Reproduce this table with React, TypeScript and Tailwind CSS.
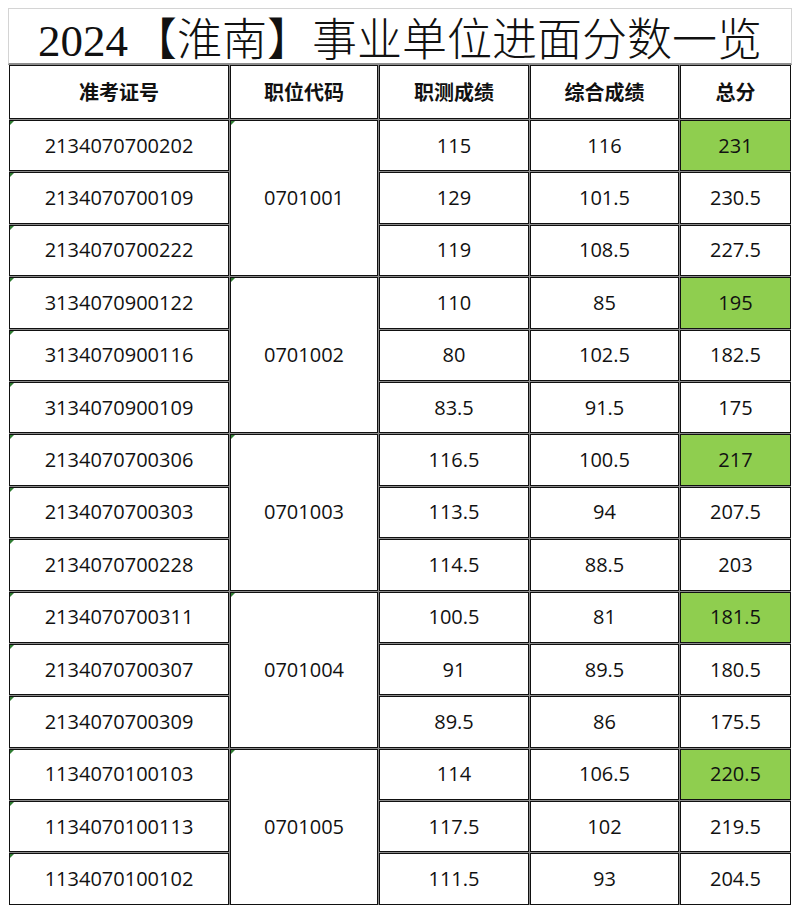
import React from "react";

type Row = { id: string; a: string; b: string; t: string; hi?: boolean };
type Group = { code: string; rows: Row[] };

const groups: Group[] = [
  {
    code: "0701001",
    rows: [
      { id: "2134070700202", a: "115", b: "116", t: "231", hi: true },
      { id: "2134070700109", a: "129", b: "101.5", t: "230.5" },
      { id: "2134070700222", a: "119", b: "108.5", t: "227.5" },
    ],
  },
  {
    code: "0701002",
    rows: [
      { id: "3134070900122", a: "110", b: "85", t: "195", hi: true },
      { id: "3134070900116", a: "80", b: "102.5", t: "182.5" },
      { id: "3134070900109", a: "83.5", b: "91.5", t: "175" },
    ],
  },
  {
    code: "0701003",
    rows: [
      { id: "2134070700306", a: "116.5", b: "100.5", t: "217", hi: true },
      { id: "2134070700303", a: "113.5", b: "94", t: "207.5" },
      { id: "2134070700228", a: "114.5", b: "88.5", t: "203" },
    ],
  },
  {
    code: "0701004",
    rows: [
      { id: "2134070700311", a: "100.5", b: "81", t: "181.5", hi: true },
      { id: "2134070700307", a: "91", b: "89.5", t: "180.5" },
      { id: "2134070700309", a: "89.5", b: "86", t: "175.5" },
    ],
  },
  {
    code: "0701005",
    rows: [
      { id: "1134070100103", a: "114", b: "106.5", t: "220.5", hi: true },
      { id: "1134070100113", a: "117.5", b: "102", t: "219.5" },
      { id: "1134070100102", a: "111.5", b: "93", t: "204.5" },
    ],
  },
];

const numFont = { fontFamily: '"Open Sans", "Noto Sans", "Noto Sans CJK SC", sans-serif' };

function Tri() {
  return (
    <span className="absolute left-0 top-0 w-0 h-0 border-t-[4px] border-r-[4px] border-t-[#2f7d32] border-r-transparent" />
  );
}

function Cell({
  children,
  className = "",
  tri = false,
}: {
  children: React.ReactNode;
  className?: string;
  tri?: boolean;
}) {
  return (
    <div
      className={
        "relative flex items-center justify-center border border-[#111] text-[20px] text-[#111] " +
        className
      }
      style={numFont}
    >
      {tri && <Tri />}
      {children}
    </div>
  );
}

export default function App() {
  const headers = ["准考证号", "职位代码", "职测成绩", "综合成绩", "总分"];
  const cells: React.ReactNode[] = [];
  groups.forEach((g, gi) => {
    g.rows.forEach((r, ri) => {
      cells.push(
        <Cell key={`id-${gi}-${ri}`} tri className="bg-white">
          <span>{r.id}</span>
        </Cell>
      );
      if (ri === 0) {
        cells.push(
          <Cell key={`code-${gi}`} tri className="bg-white row-span-3">
            <span>{g.code}</span>
          </Cell>
        );
      }
      cells.push(
        <Cell key={`a-${gi}-${ri}`} className="bg-white">
          <span>{r.a}</span>
        </Cell>
      );
      cells.push(
        <Cell key={`b-${gi}-${ri}`} className="bg-white">
          <span>{r.b}</span>
        </Cell>
      );
      cells.push(
        <Cell
          key={`t-${gi}-${ri}`}
          className={r.hi ? "bg-[#8fce4f] border-[#2a3a22]" : "bg-white"}
        >
          <span>{r.t}</span>
        </Cell>
      );
    });
  });

  return (
    <div className="w-[800px] h-[914px] bg-white px-[8px] pt-[8px]">
      <div className="h-[57px] border border-[#d4d4d4] border-b-[2px] border-b-[#8c8c8c] flex items-center justify-center">
        <div className="flex items-baseline pt-[6px] text-[45px] leading-none text-[#111]">
          <span style={{ fontFamily: '"Liberation Serif", "DejaVu Serif", serif' }}>2024</span>
          <span
            className="ml-[4px]"
            style={{ fontFamily: '"Noto Sans CJK SC", sans-serif', fontWeight: 300 }}
          >
            【淮南】事业单位进面分数一览
          </span>
        </div>
      </div>
      <div className="mx-[1px] grid grid-cols-[220px_148px_150px_149px_111px] grid-rows-[54px_repeat(15,51.4px)] gap-px bg-[#8a8a8a]">
        {headers.map((h) => (
          <div
            key={h}
            className="flex items-center justify-center bg-white border border-[#111] text-[20px] font-bold text-[#111]"
            style={{ fontFamily: '"Noto Sans CJK SC", sans-serif' }}
          >
            {h}
          </div>
        ))}
        {cells}
      </div>
    </div>
  );
}
